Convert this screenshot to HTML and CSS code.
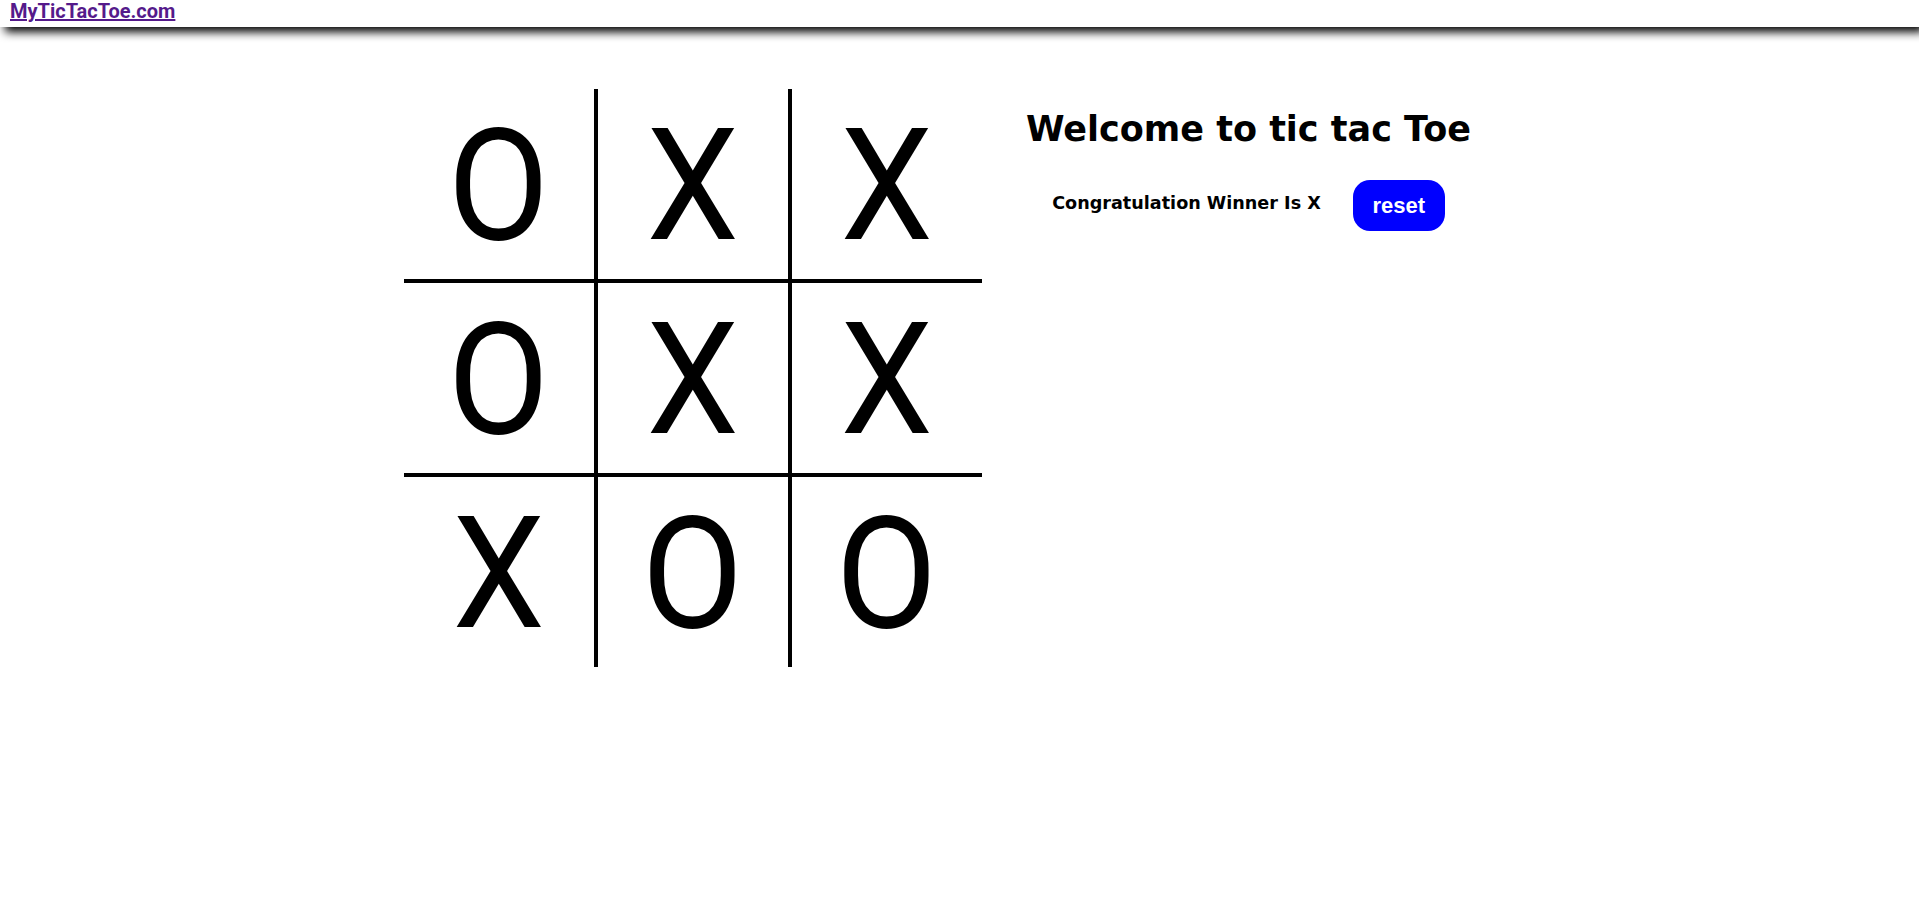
FILE: index.html
```html
<!DOCTYPE html>
<html lang="en">
<head>
<meta charset="utf-8">
<title>MyTicTacToe.com</title>
<link rel="stylesheet" href="styles.css">
</head>
<body>
<header class="topbar">
  <a class="brand" href="#">MyTicTacToe.com</a>
</header>
<main class="game">
  <div class="board">
    <div class="cell"><span class="mark">O</span></div>
    <div class="cell"><span class="mark">X</span></div>
    <div class="cell"><span class="mark">X</span></div>
    <div class="cell"><span class="mark">O</span></div>
    <div class="cell"><span class="mark">X</span></div>
    <div class="cell"><span class="mark">X</span></div>
    <div class="cell"><span class="mark">X</span></div>
    <div class="cell"><span class="mark">O</span></div>
    <div class="cell"><span class="mark">O</span></div>
  </div>
  <section class="panel">
    <h1 class="title">Welcome to tic tac Toe</h1>
    <div class="status">
      <span class="winner">Congratulation Winner Is X</span>
      <button class="reset" type="button">reset</button>
    </div>
  </section>
</main>
</body>
</html>
```
FILE: styles.css
```css
html, body {
  margin: 0;
  padding: 0;
  background: #fff;
}

body {
  font-family: "DejaVu Sans", "Open Sans", sans-serif;
  color: #000;
}

.topbar {
  height: 27px;
  padding-left: 10px;
  background: #fff;
  box-shadow: 5px 5px 10px #000;
  position: relative;
  z-index: 1;
}

.brand {
  font-family: Roboto, "Liberation Sans", sans-serif;
  font-weight: 700;
  font-size: 20px;
  line-height: 23px;
  color: #551a8b;
  text-decoration: underline;
}

.game {
  display: flex;
  justify-content: center;
  margin-top: 62px;
}

.board {
  display: grid;
  grid-template-columns: repeat(3, auto);
  width: max-content;
}

.cell {
  width: 190px;
  height: 190px;
  display: flex;
  align-items: center;
  justify-content: center;
  border-right: 4px solid #000;
  border-bottom: 4px solid #000;
}

.cell:nth-child(3n) {
  border-right: none;
}

.cell:nth-child(n+7) {
  border-bottom: none;
}

.mark {
  font-family: Roboto, sans-serif;
  font-weight: 400;
  font-size: 155px;
  line-height: 1;
  display: inline-block;
  transform: translateY(2px) scaleX(0.95);
}

.panel {
  width: 534px;
  text-align: center;
}

.title {
  font-family: "DejaVu Sans", sans-serif;
  font-weight: 700;
  font-size: 35px;
  line-height: 40px;
  margin: 20px 0 0;
}

.status {
  display: flex;
  justify-content: center;
  align-items: flex-start;
  gap: 32px;
  margin-top: 31px;
}

.winner {
  font-family: "DejaVu Sans", sans-serif;
  font-weight: 700;
  font-size: 17.6px;
  line-height: 22px;
  margin-top: 12px;
}

.reset {
  width: 92px;
  height: 51px;
  border: none;
  border-radius: 17px;
  background: #0000ff;
  color: #fff;
  font-family: "Liberation Sans", Arial, sans-serif;
  font-weight: 700;
  font-size: 22px;
  padding: 0;
}
```
